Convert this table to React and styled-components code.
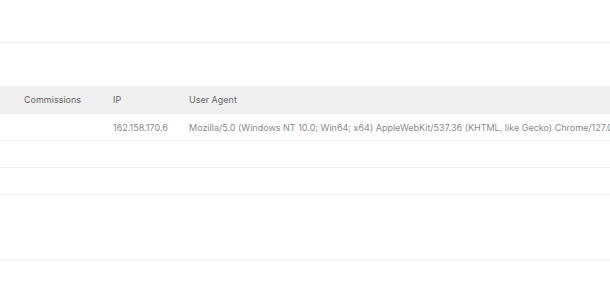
import React from "react";
import styled, { createGlobalStyle } from "styled-components";

const Global = createGlobalStyle`
  html, body { margin: 0; padding: 0; background: #ffffff; }
  body { font-family: Inter, "Noto Sans", sans-serif; }
`;

const Page = styled.div`
  width: 610px;
  height: 300px;
  overflow: hidden;
  background: #fff;
`;

const TopBar = styled.div`
  height: 42px;
  border-bottom: 1px solid #f1f1f1;
`;

const Panel = styled.div`
  margin-top: 43px;
  height: 173px;
  border-bottom: 2px solid #f3f3f3;
  overflow: hidden;
`;

const Table = styled.table`
  border-collapse: collapse;
  table-layout: fixed;
  width: 900px;
  font-size: 9px;
  white-space: nowrap;
`;

const Head = styled.th`
  height: 27px;
  padding: 0 0 0 ${(p) => p.$pad || 12}px;
  background: #efefef;
  color: #686868;
  font-weight: 400;
  text-align: left;
  width: ${(p) => p.$w}px;
  border-bottom: 1px solid #ececec;
`;

const Cell = styled.td`
  height: 26px;
  padding: 0 0 0 ${(p) => p.$pad || 12}px;
  color: #8a8a8a;
  border-bottom: 1px solid #f3f3f3;
  overflow: hidden;
`;

const rows = [
  { ip: "162.158.170.6", ua: "Mozilla/5.0 (Windows NT 10.0; Win64; x64) AppleWebKit/537.36 (KHTML, like Gecko) Chrome/127.0.0.0 Safari/537.36" },
  { ip: "", ua: "" },
  { ip: "", ua: "" },
];

export default function App() {
  return (
    <Page>
      <Global />
      <TopBar />
      <Panel>
        <Table>
          <thead>
            <tr>
              <Head $w={77} $pad={24}>Commissions</Head>
              <Head $w={64} $pad={12}>IP</Head>
              <Head $w={711} $pad={12}>User Agent</Head>
            </tr>
          </thead>
          <tbody>
            {rows.map((r, i) => (
              <tr key={i}>
                <Cell $pad={24}></Cell>
                <Cell>{r.ip}</Cell>
                <Cell>{r.ua}</Cell>
              </tr>
            ))}
          </tbody>
        </Table>
      </Panel>
    </Page>
  );
}
